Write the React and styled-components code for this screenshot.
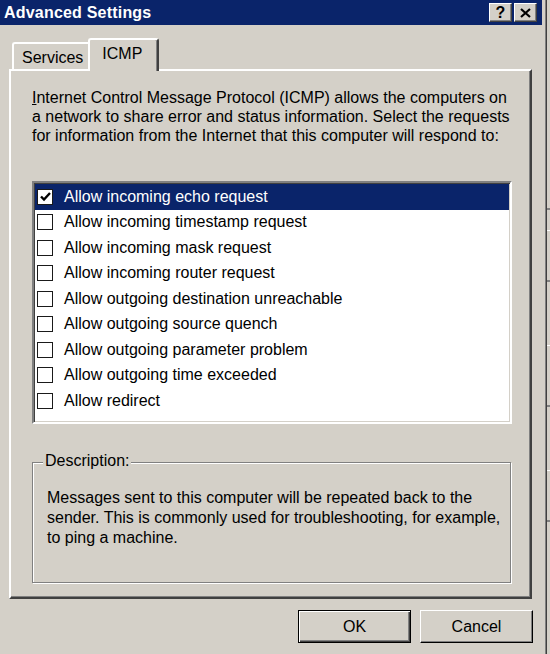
import styled, { createGlobalStyle } from "styled-components";

const GlobalStyle = createGlobalStyle`
  html, body {
    margin: 0;
    padding: 0;
    background: #d4d0c8;
    overflow: hidden;
  }
  body {
    font-family: "Liberation Sans", Arial, sans-serif;
    color: #000;
  }
`;

const Screen = styled.div`
  display: flex;
  width: 550px;
  height: 654px;
`;

const Window = styled.div`
  width: 546px;
  height: 654px;
  box-sizing: border-box;
  background: #d4d0c8;
  border-right: 1px solid #808080;
  box-shadow: inset -1px 0 0 #d4d0c8, 1px 0 0 #404040;
  display: flex;
  flex-direction: column;
`;

const BackStrip = styled.div`
  flex: 1;
  margin-left: 1px;
  background: #d4d0c8;
  background-image: linear-gradient(
    to bottom,
    transparent 0 208px, #808080 208px 210px,
    transparent 210px 230px, #fff 230px 231px,
    transparent 231px 280px, #808080 280px 282px,
    transparent 282px 345px, #fff 345px 346px,
    transparent 346px 405px, #808080 405px 407px,
    transparent 407px 470px, #fff 470px 471px,
    transparent 471px 520px, #808080 520px 522px,
    transparent 522px
  );
`;

const TitleBar = styled.div`
  height: 25px;
  margin-right: 3px;
  background: #0a246a;
  display: flex;
  align-items: center;
  justify-content: space-between;
  padding: 0 5px 0 4px;
`;

const Title = styled.div`
  color: #fff;
  font-weight: bold;
  font-size: 16px;
  letter-spacing: 0.2px;
`;

const CaptionButtons = styled.div`
  display: flex;
  gap: 2px;
`;

const CaptionButton = styled.div`
  width: 23px;
  height: 19px;
  box-sizing: border-box;
  background: #d4d0c8;
  border-top: 1px solid #fff;
  border-left: 1px solid #fff;
  border-right: 1px solid #404040;
  border-bottom: 1px solid #404040;
  box-shadow: inset -1px -1px 0 #808080;
  display: flex;
  align-items: center;
  justify-content: center;
  font-weight: bold;
  font-size: 16px;
  line-height: 1;
`;

const Body = styled.div`
  padding: 13px 0 0 9px;
  display: flex;
  flex-direction: column;
`;

const TabStrip = styled.div`
  display: flex;
  align-items: flex-end;
  padding-left: 3px;
  height: 31px;
`;

const Tab = styled.div`
  position: relative;
  z-index: ${(p) => (p.$active ? 2 : 1)};
  box-sizing: border-box;
  height: ${(p) => (p.$active ? "33px" : "27px")};
  margin-bottom: ${(p) => (p.$active ? "-2px" : "0")};
  margin-left: ${(p) => (p.$active ? "-4px" : "0")};
  padding: ${(p) => (p.$active ? "4px 15px 0 12px" : "4px 7px 0 8px")};
  background: #d4d0c8;
  border-top: 2px solid #fff;
  border-left: 2px solid #fff;
  border-right: 2px solid #404040;
  border-radius: 3px 3px 0 0;
  box-shadow: inset -1px 0 0 #808080;
  font-size: 16px;
  line-height: 19px;
`;

const Panel = styled.div`
  width: 523px;
  height: 530px;
  box-sizing: border-box;
  border-top: 2px solid #fff;
  border-left: 2px solid #fff;
  border-right: 2px solid #404040;
  border-bottom: 2px solid #404040;
  box-shadow: inset -1px -1px 0 #808080;
  padding: 17px 0 0 21px;
  display: flex;
  flex-direction: column;
`;

const Intro = styled.p`
  margin: 0;
  font-size: 16px;
  line-height: 19px;
  white-space: nowrap;
`;

const AccessKey = styled.span`
  text-decoration: underline;
`;

const ListBox = styled.div`
  margin-top: 36px;
  width: 480px;
  height: 243px;
  box-sizing: border-box;
  background: #fff;
  border-top: 2px solid #808080;
  border-left: 2px solid #808080;
  border-right: 2px solid #fff;
  border-bottom: 2px solid #fff;
  box-shadow: inset 1px 1px 0 #404040, inset -1px -1px 0 #d4d0c8;
  padding: 1px 0 0 1px;
`;

const Item = styled.div`
  height: 25.5px;
  display: flex;
  align-items: center;
  gap: 11px;
  padding-left: 2px;
  margin-right: 1px;
  background: ${(p) => (p.$selected ? "#0a246a" : "transparent")};
  color: ${(p) => (p.$selected ? "#fff" : "#000")};
  font-size: 16px;
`;

const Box = styled.div`
  width: 16px;
  height: 16px;
  box-sizing: border-box;
  background: #fff;
  border: 1.5px solid #1a1a1a;
  display: flex;
  align-items: center;
  justify-content: center;
`;

const Group = styled.fieldset`
  margin: 29px 0 0 0;
  width: 479px;
  height: 130px;
  box-sizing: border-box;
  border: 1px solid #808080;
  box-shadow: 1px 1px 0 #fff, inset 1px 1px 0 #fff;
  padding: 17px 14px 0 14px;
  min-width: 0;
`;

const Legend = styled.legend`
  font-size: 16px;
  padding: 0 2px;
  margin-left: -4px;
  background: #d4d0c8;
  position: relative;
  top: -1px;
`;

const GroupText = styled.p`
  margin: 0;
  font-size: 16px;
  line-height: 20px;
  white-space: nowrap;
`;

const ButtonRow = styled.div`
  display: flex;
  justify-content: flex-end;
  gap: 9px;
  width: 524px;
  margin-top: 11px;
`;

const Button = styled.div`
  width: 113px;
  height: 33px;
  box-sizing: border-box;
  background: #d4d0c8;
  display: flex;
  align-items: center;
  justify-content: center;
  font-size: 16px;
  border-top: 1px solid ${(p) => (p.$default ? "#000" : "#fff")};
  border-left: 1px solid ${(p) => (p.$default ? "#000" : "#fff")};
  border-right: 1px solid #000;
  border-bottom: 1px solid #000;
  box-shadow: ${(p) =>
    p.$default
      ? "inset 1px 1px 0 #fff, inset -1px -1px 0 #404040, inset -2px -2px 0 #808080"
      : "inset -1px -1px 0 #808080, inset 1px 1px 0 #d4d0c8"};
`;

const items = [
  "Allow incoming echo request",
  "Allow incoming timestamp request",
  "Allow incoming mask request",
  "Allow incoming router request",
  "Allow outgoing destination unreachable",
  "Allow outgoing source quench",
  "Allow outgoing parameter problem",
  "Allow outgoing time exceeded",
  "Allow redirect",
];

const Check = () => (
  <svg width="11" height="10" viewBox="0 0 11 10">
    <path d="M1 4.5 L4 7.5 L10 1" fill="none" stroke="#000" strokeWidth="2.4" />
  </svg>
);

const CloseGlyph = () => (
  <svg width="11" height="10" viewBox="0 0 11 10">
    <path d="M1 1 L10 9 M10 1 L1 9" stroke="#000" strokeWidth="2.2" />
  </svg>
);

export default function App() {
  return (
    <Screen>
      <GlobalStyle />
      <Window>
        <TitleBar>
          <Title>Advanced Settings</Title>
          <CaptionButtons>
            <CaptionButton>?</CaptionButton>
            <CaptionButton>
              <CloseGlyph />
            </CaptionButton>
          </CaptionButtons>
        </TitleBar>
        <Body>
          <TabStrip>
            <Tab>Services</Tab>
            <Tab $active>ICMP</Tab>
          </TabStrip>
          <Panel>
            <Intro>
              <AccessKey>I</AccessKey>nternet Control Message Protocol (ICMP)
              allows the computers on
              <br />
              a network to share error and status information. Select the
              requests
              <br />
              for information from the Internet that this computer will respond
              to:
            </Intro>
            <ListBox>
              {items.map((label, i) => (
                <Item key={label} $selected={i === 0}>
                  <Box>{i === 0 && <Check />}</Box>
                  {label}
                </Item>
              ))}
            </ListBox>
            <Group>
              <Legend>Description:</Legend>
              <GroupText>
                Messages sent to this computer will be repeated back to the
                <br />
                sender. This is commonly used for troubleshooting, for example,
                <br />
                to ping a machine.
              </GroupText>
            </Group>
          </Panel>
          <ButtonRow>
            <Button $default>OK</Button>
            <Button>Cancel</Button>
          </ButtonRow>
        </Body>
      </Window>
      <BackStrip />
    </Screen>
  );
}
